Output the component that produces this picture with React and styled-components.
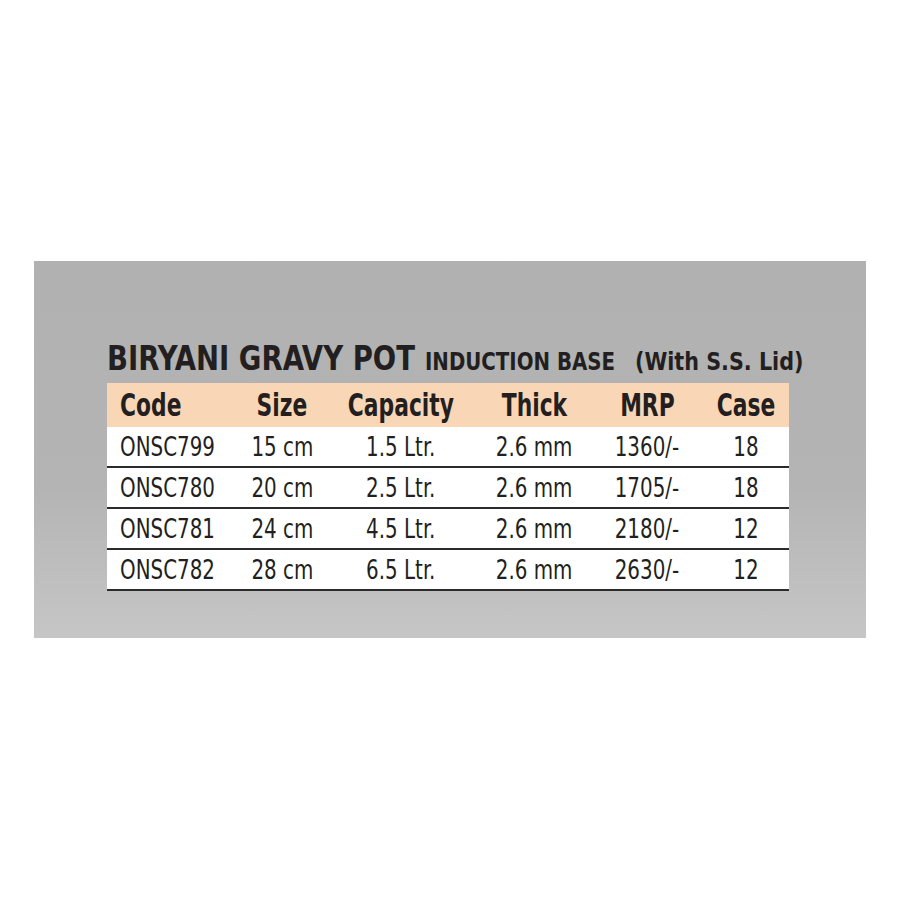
import React from 'react';
import styled, { createGlobalStyle } from 'styled-components';

const Global = createGlobalStyle`
  html, body {
    margin: 0;
    padding: 0;
    background: #ffffff;
  }
  body {
    font-family: "Liberation Sans Narrow", "DejaVu Sans Condensed", "Liberation Sans", sans-serif;
    color: #231f20;
  }
`;

const Page = styled.div`
  width: 900px;
  height: 900px;
  padding-top: 261px;
  box-sizing: border-box;
`;

const Panel = styled.section`
  margin-left: 34px;
  width: 832px;
  height: 377px;
  background: linear-gradient(180deg, #b0b1b0 0%, #b3b4b3 60%, #c5c6c5 100%);
  padding: 80px 0 0 73px;
  box-sizing: border-box;
`;

const Title = styled.h1`
  margin: 0;
  height: 42px;
  display: flex;
  align-items: baseline;
  white-space: nowrap;
  font-weight: 700;
  line-height: 1;
  padding-top: 1px;
  box-sizing: border-box;
`;

// condensed look: squeeze the glyphs horizontally, the gap in front is given in real px
const Squeeze = styled.span`
  display: inline-block;
  font-size: ${p => p.size}px;
  transform: scaleX(${p => p.sx});
  transform-origin: ${p => p.origin || 'center'};
  margin-left: ${p => p.gap || 0}px;
  margin-right: ${p => p.pull || 0}px;
`;

const Table = styled.div`
  width: 682px;
  display: grid;
  grid-template-columns: 125px 100px 138px 128px 98px 93px;
`;

const HeadCell = styled.div`
  background: #f9d6b6;
  height: 44px;
  display: flex;
  align-items: center;
  justify-content: ${p => (p.left ? 'flex-start' : 'center')};
  padding-left: ${p => (p.left ? '13px' : p.shift || '0')};
  font-weight: 700;
`;

const Cell = styled.div`
  background: #ffffff;
  height: 39px;
  border-bottom: 2px solid #2b2b2b;
  display: flex;
  align-items: center;
  justify-content: ${p => (p.left ? 'flex-start' : 'center')};
  padding-left: ${p => (p.left ? '13px' : p.shift || '0')};
  font-weight: 400;
`;

const columns = ['Code', 'Size', 'Capacity', 'Thick', 'MRP', 'Case'];

const rows = [
  ['ONSC799', '15 cm', '1.5 Ltr.', '2.6 mm', '1360/-', '18'],
  ['ONSC780', '20 cm', '2.5 Ltr.', '2.6 mm', '1705/-', '18'],
  ['ONSC781', '24 cm', '4.5 Ltr.', '2.6 mm', '2180/-', '12'],
  ['ONSC782', '28 cm', '6.5 Ltr.', '2.6 mm', '2630/-', '12'],
];

export default function App() {
  return (
    <Page>
      <Global />
      <Panel>
        <Title>
          <Squeeze size={33} sx={0.927} origin="left" pull={-26}>BIRYANI GRAVY POT</Squeeze>
          <Squeeze size={24.7} sx={0.89} origin="left" gap={12} pull={-23}>INDUCTION BASE</Squeeze>
          <Squeeze size={25} sx={0.92} origin="left" gap={19}>(With S.S. Lid)</Squeeze>
        </Title>
        <Table>
          {columns.map((c, i) => (
            <HeadCell key={c} left={i === 0} shift={i === 5 ? '7px' : undefined}>
              <Squeeze size={31.5} sx={0.77} origin={i === 0 ? 'left' : 'center'}>{c}</Squeeze>
            </HeadCell>
          ))}
          {rows.map(r =>
            r.map((v, i) => (
              <Cell key={r[0] + i} left={i === 0} shift={i === 5 ? '7px' : undefined}>
                <Squeeze size={26} sx={0.85} origin={i === 0 ? 'left' : 'center'}>{v}</Squeeze>
              </Cell>
            ))
          )}
        </Table>
      </Panel>
    </Page>
  );
}
